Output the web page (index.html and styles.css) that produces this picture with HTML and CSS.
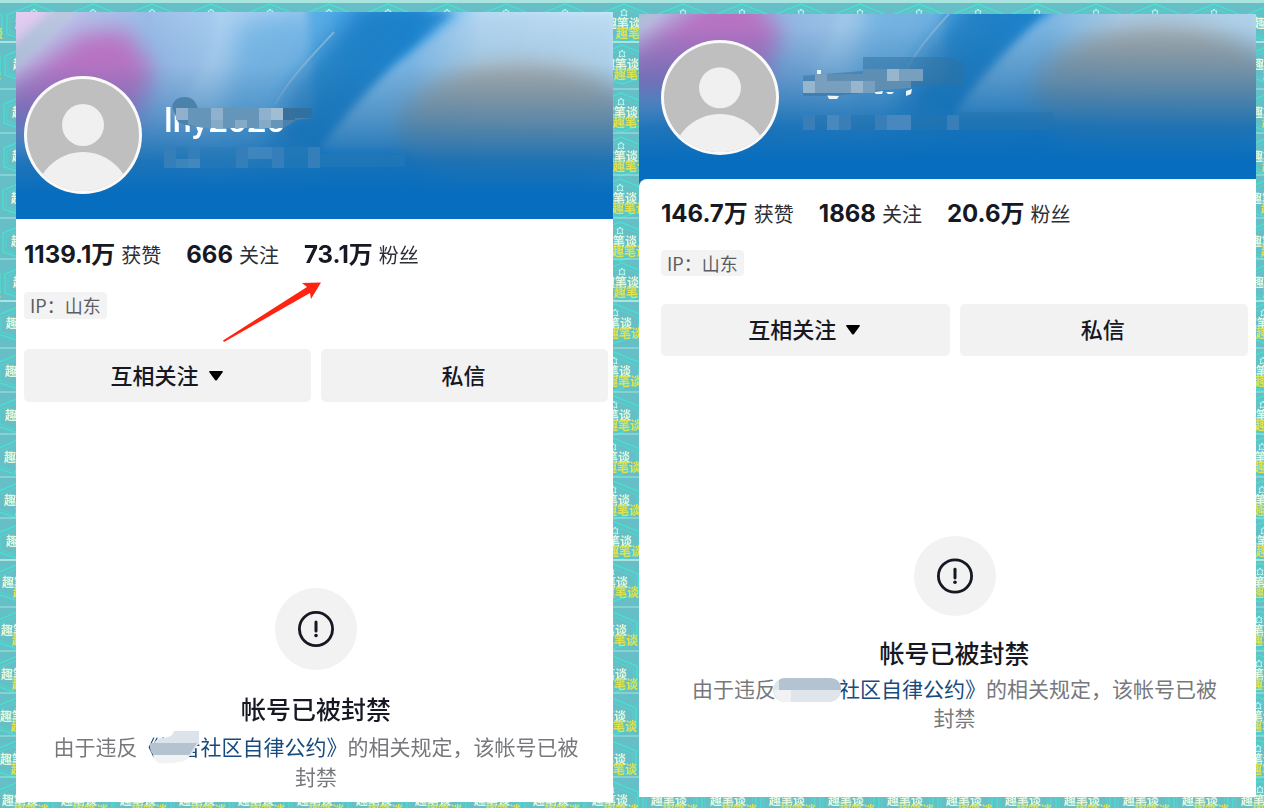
FILE: index.html
```html
<!doctype html>
<html lang="zh-CN">
  <head>
    <meta charset="UTF-8" />
    <meta name="viewport" content="width=device-width, initial-scale=1.0" />
    <title>帐号已被封禁</title>
    <link rel="stylesheet" href="styles.css">
  </head>
  <body>
    <!-- tiled backdrop -->
    <svg class="backdrop" aria-hidden="true">
      <defs>
        <g id="tile">
          <path d="M-24 0H35" stroke="#a3e6df" />
          <path d="M19 4L46 15V34L19 43L-8 34V15Z" fill="none" stroke="#45e0cf" stroke-width="1.400" />
          <path d="M19 8L43 18V32L19 40L-5 32V18Z" fill="none" stroke="#4bd6c9" />
          <path d="M19 9l1 2 2 0-1 2 1 3-3-1-3 1 1-3-1-2 2 0z" fill="none" stroke="#b4fff2" />
          <text x="0" y="28" class="tile-white">趣笔谈</text>
          <text x="11" y="38" class="tile-yellow">趣笔谈</text>
        </g>
        <g id="tiles">
          <use href="#tile" x="0" y="0" />
          <use href="#tile" x="-1" y="48" />
          <use href="#tile" x="-1" y="92" />
          <use href="#tile" x="-2" y="134" />
          <use href="#tile" x="-2" y="177" />
          <use href="#tile" x="0" y="218" />
          <path d="M-24 0H35" stroke="#a9e5de" stroke-width="4" />
        </g>
        <pattern id="wall" x="-12" y="-218" width="59" height="259" patternUnits="userSpaceOnUse">
          <use href="#tiles" x="27" />
          <use href="#tiles" x="-32" />
        </pattern>
        <pattern id="wall-b" href="#wall" x="-14" y="41" />
        <pattern id="wall-c" href="#wall" x="-21" y="300" />
        <pattern id="wall-d" href="#wall" x="-25" y="559" />
      </defs>
      <rect width="100%" height="41" fill="url(#wall)" />
      <rect y="41" width="100%" height="259" fill="url(#wall-b)" />
      <rect y="300" width="100%" height="259" fill="url(#wall-c)" />
      <rect y="559" width="100%" height="259" fill="url(#wall-d)" />
      <rect width="100%" height="3" fill="#a9e5de" />
    </svg>

    <!-- shared drawings -->
    <svg class="defs" aria-hidden="true">
      <defs>
        <linearGradient id="sky" x2="1" y2="0">
          <stop offset="0" stop-color="#cfc4ea" />
          <stop offset=".22" stop-color="#9cbde8" />
          <stop offset=".34" stop-color="#a8cdf0" />
          <stop offset=".48" stop-color="#5dafe8" />
          <stop offset=".66" stop-color="#3c9ee6" />
          <stop offset=".78" stop-color="#b8dcf4" />
          <stop offset="1" stop-color="#cdeefc" />
        </linearGradient>
        <linearGradient id="sea" x2="0" y2="1">
          <stop offset="0" stop-color="#0a5f9f" stop-opacity="0" />
          <stop offset=".25" stop-color="#2a6da2" stop-opacity=".12" />
          <stop offset=".5" stop-color="#1c6ba9" stop-opacity=".5" />
          <stop offset=".72" stop-color="#0f6cb4" stop-opacity=".9" />
          <stop offset=".88" stop-color="#076dbe" />
          <stop offset="1" stop-color="#066dc0" />
        </linearGradient>
        <filter id="soft" x="-30%" y="-30%" width="160%" height="160%"><feGaussianBlur stdDeviation="11" /></filter>
        <filter id="thin" x="-30%" y="-30%" width="160%" height="160%"><feGaussianBlur stdDeviation="4" /></filter>
      </defs>
      <symbol id="cover" viewBox="0 0 597 207" preserveAspectRatio="xMidYMax slice">
        <rect width="597" height="207" fill="url(#sky)" />
        <path d="M-30 -20H60L-30 70Z" fill="#e6cdf2" filter="url(#soft)" />
        <path d="M-20 120L-20 85L66 22L110 18L138 60L115 120Z" fill="#c873c6" filter="url(#soft)" />
        <path d="M70 -10L-20 75V50L45 -10Z" fill="#bcc8de" filter="url(#thin)" />
        <path d="M200 -10C200 30 190 60 166 95L300 110L290 -10Z" fill="#b0d3f2" opacity=".8" filter="url(#thin)" />
        <path d="M225 10L290 0L330 20L270 100L200 130Z" fill="#62aee4" opacity=".6" filter="url(#soft)" />
        <path d="M345 -10H430L375 40L300 140L250 140L275 75Z" fill="#0f74bd" opacity=".7" filter="url(#soft)" />
        <path d="M400 0H440C390 35 350 80 304 140L275 120Z" fill="#187fcb" opacity=".7" filter="url(#thin)" />
        <path d="M318 20C295 45 275 65 259 92" fill="none" stroke="#9fc0dc" stroke-width="2" opacity=".7" />
        <path d="M303 138C350 75 400 25 470 0H600V140Z" fill="#b4d2ec" opacity=".6" filter="url(#thin)" />
        <ellipse cx="504" cy="118" rx="122" ry="66" fill="#b0a498" opacity=".85" filter="url(#soft)" />
        <rect width="597" height="207" fill="url(#sea)" />
      </symbol>
      <symbol id="avatar" viewBox="0 0 118 118" preserveAspectRatio="none">
        <clipPath id="avatar-clip"><circle cx="59" cy="59" r="56" /></clipPath>
        <circle cx="59" cy="59" r="59" fill="#fafafa" />
        <circle cx="59" cy="59" r="56" fill="#bfbfbf" />
        <g fill="#f0f0f0" clip-path="url(#avatar-clip)">
          <circle cx="59" cy="49" r="21" />
          <ellipse cx="59" cy="125" rx="48" ry="49" />
        </g>
      </symbol>
      <symbol id="alert" viewBox="0 0 82 82" preserveAspectRatio="none">
        <circle cx="41" cy="41" r="41" fill="#f2f2f2" />
        <circle cx="41" cy="41" r="16.6" fill="none" stroke="#161823" stroke-width="2.8" />
        <path d="M41 34V43" stroke="#161823" stroke-width="3" stroke-linecap="round" />
        <circle cx="41" cy="47.500" r="1.800" fill="#161823" />
      </symbol>
    </svg>

    <main class="board">
      <article class="profile profile-first">
        <header class="banner">
          <svg class="cover" aria-hidden="true"><use href="#cover" /></svg>
          <svg class="avatar" role="img" aria-label="头像"><use href="#avatar" /></svg>
          <div class="identity">
            <h1 class="name">lhy2020</h1>
            <svg class="mosaic" width="250" height="80" viewBox="0 0 250 80" aria-hidden="true">
              <path d="M8 19Q10 9 20 9Q30 8 34 20H148V30L132 32L120 40H60Q25 40 14 34Z" fill="#4a82ac" />
              <path d="M12 20h12v12h-12zM47 20h12v12h-12zM95 20h12v12h-12z" fill="#8fb1ce" />
              <path d="M24 20h23v20q-14 0-23-4zM59 20h36v20H59zM107 32h12v8h-12z" fill="#6695ba" />
              <path d="M47 32h12v8h-12zM71 32h12v8H71zM95 32h12v8H95z" fill="#84aac6" />
              <path d="M107 20h12v12h-12z" fill="#a1bdd1" />
              <path d="M119 20h12v12h-12z" fill="#376f9d" />
              <path d="M131 20h17v10h-17z" fill="#236a9d" opacity=".7" />
              <path d="M0 59h156v21H0zM156 67h85v12h-85z" fill="#2879b5" opacity=".5" />
              <path d="M0 59h12v21H0zM24 59h12v21H24zM72 59h12v21H72zM108 59h12v21h-12zM144 59h12v21h-12z" fill="#347fba" />
              <path d="M12 71h24v9H12zM84 59h24v12H84z" fill="#4e8dc0" opacity=".6" />
            </svg>
          </div>
        </header>
        <div class="content">
          <ul class="stats">
            <li><strong>1139.1万</strong><span>获赞</span></li>
            <li><strong>666</strong><span>关注</span></li>
            <li class="marked">
              <strong>73.1万</strong><span>粉丝</span>
              <svg class="arrow" width="98" height="60" viewBox="0 0 98 60" aria-hidden="true">
                <path d="M0 58.500L84 5L79 1L98 0.500L88 17L87 11L1 60Z" fill="#ff2312" />
              </svg>
            </li>
          </ul>
          <span class="tag">IP：山东</span>
          <div class="actions">
            <button type="button">互相关注<svg width="14" height="10" viewBox="0 0 14 10" aria-hidden="true"><path d="M1 0H13Q14.500 0 13.500 1.500L8 9Q7 10 6 9L.5 1.500Q-.5 0 1 0Z" /></svg></button>
            <button type="button">私信</button>
          </div>
          <section class="notice">
            <svg class="alert" aria-hidden="true"><use href="#alert" /></svg>
            <h2>帐号已被封禁</h2>
            <p>由于违反<a href="#rules">《抖音社区自律公约》<svg class="smudge" width="52" height="34" viewBox="0 0 52 34" aria-hidden="true"><path d="M5 12Q8 7 14 7Q24 6 25 0H50V12L42 24H5L0 13Z" fill="#dce3ea" /><path d="M1 12H48L40 24H6Q2 24 1 16Z" fill="#b5c2d0" /><path d="M4 24H41Q38 31 30 31Q20 33 10 32Q5 30 4 24Z" fill="#f0f2f4" /></svg></a>的相关规定，该帐号已被封禁</p>
          </section>
        </div>
      </article>

      <article class="profile profile-second">
        <header class="banner">
          <svg class="cover" aria-hidden="true"><use href="#cover" /></svg>
          <svg class="avatar" role="img" aria-label="头像"><use href="#avatar" /></svg>
          <div class="identity">
            <svg class="mosaic" width="250" height="80" viewBox="0 0 250 80" aria-hidden="true">
              <path d="M14 13h4v5h-4zM24 38l12 1-2 3h-8zM71 35l9-1-1 3h-6zM83 35h8l-2 2h-4zM103 34l6-2-1 5-5 2z" fill="#eef5fa" />
              <path d="M-14 20L60 14V0H146L160 6V28L112 30L80 34L30 39L-12 39Q-24 28 -14 20Z" fill="#30719f" opacity=".5" />
              <path d="M0 24h12v12H0zM12 17h12v19H12zM24 24h24v12H24zM48 24h24v12H48zM84 12h36v12H84z" fill="#799fbe" />
              <path d="M48 24h12v12H48zM84 12h12v12H84zM0 24h12v12H0z" fill="#98b5ce" />
              <path d="M24 17h36v7H24zM60 12h24v12H60zM72 24h36v7L72 34z" fill="#5e8eb2" />
              <path d="M0 58h156v15H0zM156 55h112v18H156z" fill="#2673ad" opacity=".5" />
              <path d="M0 58h12v15H0zM36 58h12v15H36zM72 58h12v15H72zM144 58h12v15h-12z" fill="#3a7eb8" />
              <path d="M24 58h12v15H24zM84 58h24v15H84z" fill="#4888be" />
            </svg>
          </div>
        </header>
        <div class="content">
          <ul class="stats">
            <li><strong>146.7万</strong><span>获赞</span></li>
            <li><strong>1868</strong><span>关注</span></li>
            <li><strong>20.6万</strong><span>粉丝</span></li>
          </ul>
          <span class="tag">IP：山东</span>
          <div class="actions">
            <button type="button">互相关注<svg width="14" height="10" viewBox="0 0 14 10" aria-hidden="true"><path d="M1 0H13Q14.500 0 13.500 1.500L8 9Q7 10 6 9L.5 1.500Q-.5 0 1 0Z" /></svg></button>
            <button type="button">私信</button>
          </div>
          <section class="notice">
            <svg class="alert" aria-hidden="true"><use href="#alert" /></svg>
            <h2>帐号已被封禁</h2>
            <p>由于违反<a href="#rules">《抖音社区自律公约》<svg class="smudge" width="68" height="24" viewBox="0 0 68 24" aria-hidden="true"><rect width="68" height="24" rx="12" fill="#dfe5eb" /><path d="M6 2Q8 0 12 0H56Q68 0 68 12H6Z" fill="#b3c3d1" /><path d="M1 12H18V24H12Q2 23 1 12Z" fill="#f0f2f4" /></svg></a>的相关规定，该帐号已被封禁</p>
          </section>
        </div>
      </article>
    </main>
  </body>
</html>
```
FILE: styles.css
```css
* {
  box-sizing: border-box;
}
body {
  margin: 0;
  min-height: 100vh;
  overflow: hidden;
  background-color: #66bfc7;
  color: #161823;
  font-family: "Noto Sans CJK SC", sans-serif;
}
.backdrop {
  position: fixed;
  inset: 0;
  width: 100%;
  height: 100%;
}
.tile-white,
.tile-yellow {
  font-size: 12px;
  font-weight: 700;
}
.tile-white {
  fill: #e3f8dc;
}
.tile-yellow {
  fill: #dfe350;
}
.defs {
  position: absolute;
  width: 0;
  height: 0;
}
.board {
  position: relative;
  display: grid;
  grid-template-columns: 597fr 617fr;
  align-items: start;
  gap: 26px;
  padding: 12px 8px 0 16px;
}
.profile {
  min-width: 0;
}
.profile-second {
  margin-top: 2px;
}

/* banner */
.banner {
  position: relative;
  display: flex;
  align-items: flex-start;
  gap: 22px;
  height: 207px;
  padding: 64px 8px 0;
  overflow: hidden;
}
.profile-second .banner {
  height: 173px;
  padding: 26px 22px 0;
  gap: 24px;
}
.cover {
  position: absolute;
  inset: 0;
  width: 100%;
  height: 100%;
}
.avatar {
  position: relative;
  flex: none;
  width: 118px;
  height: 118px;
}
.profile-second .avatar {
  height: 115px;
}
.identity {
  position: relative;
  padding-top: 24px;
}
.name {
  margin: 0;
  color: #fff;
  font-family: Roboto, sans-serif;
  font-size: 34px;
  font-weight: 500;
  line-height: 40px;
}
.mosaic {
  position: absolute;
  top: 12px;
  left: 0;
}
.profile-second .mosaic {
  top: 17px;
}

/* profile details */
.content {
  padding: 18px 5px 11px 8px;
  background-color: #fff;
}
.profile-second .content {
  position: relative;
  margin-top: -8px;
  padding: 17px 8px 65px 22px;
  border-radius: 8px 0 0 0;
}
.stats {
  display: flex;
  gap: 25px;
  margin: 0 0 19px;
  padding: 0;
  list-style: none;
}
.profile-second .stats {
  margin-bottom: 18px;
}
.stats li {
  display: flex;
  align-items: center;
  gap: 6px;
  height: 36px;
}
.stats strong {
  font-family: Inter, "Noto Sans CJK SC", sans-serif;
  font-size: 24px;
  font-weight: 700;
  line-height: 36px;
}
.stats span {
  color: #2c2e36;
  font-size: 20px;
  line-height: 36px;
}
.marked {
  position: relative;
}
.arrow {
  position: absolute;
  top: 45px;
  right: 98px;
}
.tag {
  display: block;
  width: fit-content;
  padding: 0 6px;
  border-radius: 4px;
  background-color: #f3f3f3;
  color: #5c5d63;
  font-size: 18px;
  line-height: 27px;
}
.profile-second .tag {
  line-height: 26px;
}
.actions {
  display: grid;
  grid-template-columns: 1fr 1fr;
  gap: 10px;
  margin-top: 30px;
}
.profile-second .actions {
  margin-top: 28px;
}
.actions button {
  display: flex;
  align-items: center;
  justify-content: center;
  gap: 10px;
  height: 53px;
  padding: 0 2px 4px 0;
  border: none;
  border-radius: 5px;
  background-color: #f2f2f2;
  color: #161823;
  font-family: inherit;
  font-size: 22px;
  font-weight: 500;
  cursor: pointer;
}
.actions svg {
  margin-top: 4px;
}
.profile-second .actions button {
  height: 52px;
}

/* ban notice */
.notice {
  display: flex;
  flex-direction: column;
  align-items: center;
  margin-top: 186px;
  text-align: center;
}
.profile-second .notice {
  margin-top: 180px;
}
.alert {
  width: 82px;
  height: 82px;
}
.profile-second .alert {
  height: 80px;
}
.notice h2 {
  margin: 20px 0 5px;
  font-size: 25px;
  font-weight: 500;
  line-height: 36px;
}
.profile-second h2 {
  margin: 18px 0 4px;
}
.notice p {
  max-width: 540px;
  margin: 0;
  color: #77787c;
  font-size: 21px;
  line-height: 30px;
}
.profile-second p {
  line-height: 29px;
}
.notice a {
  position: relative;
  color: #174a7e;
  text-decoration: none;
}
.smudge {
  position: absolute;
  top: 0;
  left: 11px;
}
.profile-second .smudge {
  top: 5px;
  left: -3px;
}
```
